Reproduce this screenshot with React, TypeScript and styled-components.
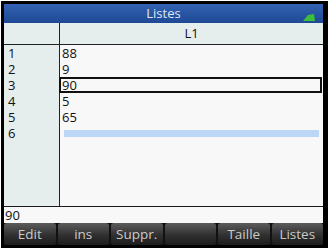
import React from "react";
import styled, { createGlobalStyle } from "styled-components";

const Global = createGlobalStyle`
  html, body { margin: 0; padding: 0; background: #ffffff; }
  body { font-family: "Open Sans", "DejaVu Sans", sans-serif; }
`;

const Frame = styled.div`
  width: 329px;
  height: 248px;
  box-sizing: border-box;
  padding: 1px 1px 0 1px;
  background: #ffffff;
`;

const Bezel = styled.div`
  height: 247px;
  box-sizing: border-box;
  background: #000;
  padding: 3px 5px 3px 3px;
  display: flex;
  flex-direction: column;
`;

const Screen = styled.div`
  flex: 1;
  display: flex;
  flex-direction: column;
  background: #f8f8f8;
  overflow: hidden;
`;

const TitleBar = styled.div`
  height: 19px;
  flex: none;
  position: relative;
  display: flex;
  align-items: center;
  justify-content: center;
  background: linear-gradient(#3263b2, #1d4894);
  color: #dfe7f6;
  font-size: 13px;
  line-height: 19px;
`;

const Battery = styled.svg`
  position: absolute;
  right: 8px;
  top: 10px;
`;

const Grid = styled.div`
  flex: 1;
  display: grid;
  grid-template-columns: 56px 1fr;
  grid-template-rows: 22px 1fr;
  border-bottom: 1px solid #1a1a1a;
`;

const IndexHead = styled.div`
  background: #e6eded;
  border-right: 1px solid #222;
  border-bottom: 1px solid #222;
`;

const ColHead = styled.div`
  background: #e6eded;
  border-bottom: 1px solid #222;
  text-align: center;
  font-size: 13px;
  line-height: 21px;
  color: #111;
`;

const IndexCol = styled.div`
  background: #e6eded;
  border-right: 1px solid #222;
  padding-left: 4px;
`;

const ValueCol = styled.div`
  background: #f8f8f8;
`;

const Cell = styled.div`
  height: 16px;
  font-size: 13px;
  line-height: 16px;
  color: #111;
`;

const Value = styled.div<{ $selected?: boolean }>`
  height: 16px;
  box-sizing: border-box;
  font-size: 13px;
  line-height: ${(p) => (p.$selected ? "13px" : "16px")};
  color: #111;
  padding-left: ${(p) => (p.$selected ? "1px" : "2px")};
  margin-left: ${(p) => (p.$selected ? "-1px" : "0")};
  border: ${(p) => (p.$selected ? "2px solid #111" : "none")};
  margin-right: ${(p) => (p.$selected ? "1px" : "0")};
`;

const NewRow = styled.div`
  height: 16px;
  display: flex;
  align-items: center;
  padding: 0 4px 0 4px;
`;

const NewBar = styled.div`
  height: 7px;
  flex: 1;
  background: #bcd7f6;
`;

const Entry = styled.div`
  height: 16px;
  flex: none;
  font-size: 13px;
  line-height: 16px;
  color: #111;
  padding-left: 1px;
  background: #f8f8f8;
`;

const Keys = styled.div`
  height: 22px;
  flex: none;
  display: grid;
  grid-template-columns: repeat(6, 1fr);
  gap: 2px;
  background: #111;
`;

const Key = styled.div`
  border-radius: 3px;
  background: linear-gradient(#5c5c5c, #303030 55%, #1c1c1c);
  color: #cacaca;
  font-size: 13.5px;
  line-height: 22px;
  text-align: center;
`;

const values = ["88", "9", "90", "5", "65"];
const keys = ["Edit", "ins", "Suppr.", "", "Taille", "Listes"];

export default function App() {
  return (
    <>
      <Global />
      <Frame>
        <Bezel>
          <Screen>
            <TitleBar>
              Listes
              <Battery width="12" height="7" viewBox="0 0 12 7">
                <path d="M0 7 L5 1 L11 0 L12 7 Z" fill="#3bbf3b" />
              </Battery>
            </TitleBar>
            <Grid>
              <IndexHead />
              <ColHead>L1</ColHead>
              <IndexCol>
                {[1, 2, 3, 4, 5, 6].map((n) => (
                  <Cell key={n}>{n}</Cell>
                ))}
              </IndexCol>
              <ValueCol>
                {values.map((v, i) => (
                  <Value key={i} $selected={i === 2}>
                    {v}
                  </Value>
                ))}
                <NewRow>
                  <NewBar />
                </NewRow>
              </ValueCol>
            </Grid>
            <Entry>90</Entry>
            <Keys>
              {keys.map((k, i) => (
                <Key key={i}>{k}</Key>
              ))}
            </Keys>
          </Screen>
        </Bezel>
      </Frame>
    </>
  );
}
